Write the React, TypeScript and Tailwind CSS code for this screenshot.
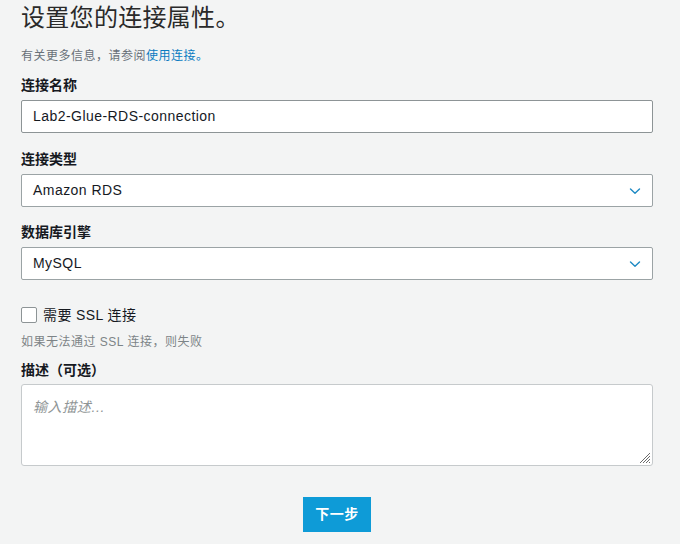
import React from "react";

const font = { fontFamily: '"Liberation Sans", "Noto Sans CJK SC", sans-serif' };

function Chevron() {
  return (
    <svg width="12" height="8" viewBox="0 0 12 8" className="absolute right-[11px] top-1/2 -translate-y-1/2">
      <path d="M1.5 2 L6 6.3 L10.5 2" fill="none" stroke="#1f8ac4" strokeWidth="1.4" strokeLinecap="round" strokeLinejoin="round" />
    </svg>
  );
}

export default function App() {
  return (
    <div className="w-[680px] h-[544px] bg-[#f3f4f4] overflow-hidden text-[#16191f]" style={font}>
      <div className="ml-[21px] w-[632px] flex flex-col">
        <div className="h-[36px] leading-[36px] text-[24px] text-[#2a2a2a] tracking-[0.3px]">设置您的连接属性。</div>
        <div className="mt-[12px] h-[16px] leading-[16px] text-[12px] text-[#687078] tracking-[0.5px]">
          有关更多信息，请参阅<span className="text-[#0a7bc1]">使用连接。</span>
        </div>
        <div className="mt-[11px] h-[20px] leading-[20px] text-[14px] font-bold">连接名称</div>
        <div className="mt-[5px] h-[33px] bg-white border border-[#8d9496] rounded-[2px] flex items-center px-[11px] text-[14px] tracking-[0.45px] text-[#16191f]">
          Lab2-Glue-RDS-connection
        </div>
        <div className="mt-[16px] h-[20px] leading-[20px] text-[14px] font-bold">连接类型</div>
        <div className="relative mt-[5px] h-[33px] bg-white border border-[#9ba3a5] rounded-[2px] flex items-center px-[11px] text-[14px] tracking-[0.45px]">
          Amazon RDS
          <Chevron />
        </div>
        <div className="mt-[15px] h-[20px] leading-[20px] text-[14px] font-bold">数据库引擎</div>
        <div className="relative mt-[5px] h-[33px] bg-white border border-[#9ba3a5] rounded-[2px] flex items-center px-[11px] text-[14px] tracking-[0.45px]">
          MySQL
          <Chevron />
        </div>
        <div className="mt-[25px] h-[20px] flex items-center">
          <div className="w-[16px] h-[16px] bg-white border border-[#8d9496] rounded-[2px]" />
          <span className="ml-[6px] text-[14px] leading-[20px] tracking-[0.4px]">需要 SSL 连接</span>
        </div>
        <div className="mt-[9px] h-[16px] leading-[16px] text-[12px] text-[#7d8487] tracking-[0.5px]">如果无法通过 SSL 连接，则失败</div>
        <div className="mt-[10px] h-[20px] leading-[20px] text-[14px] font-bold">描述（可选）</div>
        <div className="relative mt-[4px] h-[82px] bg-white border border-[#c6cacc] rounded-[3px] px-[11px] pt-[10px]">
          <span className="italic text-[14px] text-[#8f9596] leading-[20px] tracking-[0.6px]">输入描述...</span>
          <svg width="12" height="12" viewBox="0 0 12 12" className="absolute right-[1px] bottom-[1px]">
            <path d="M11 1 L1 11 M11 4 L4 11 M11 7 L7 11 M11 10 L10 11" stroke="#6b6b6b" strokeWidth="1" fill="none" />
          </svg>
        </div>
        <div className="mt-[31px] flex justify-center">
          <div className="w-[68px] h-[35px] bg-[#0e9bd7] text-white text-[14px] font-bold flex items-center justify-center tracking-[0.5px]">下一步</div>
        </div>
      </div>
    </div>
  );
}
